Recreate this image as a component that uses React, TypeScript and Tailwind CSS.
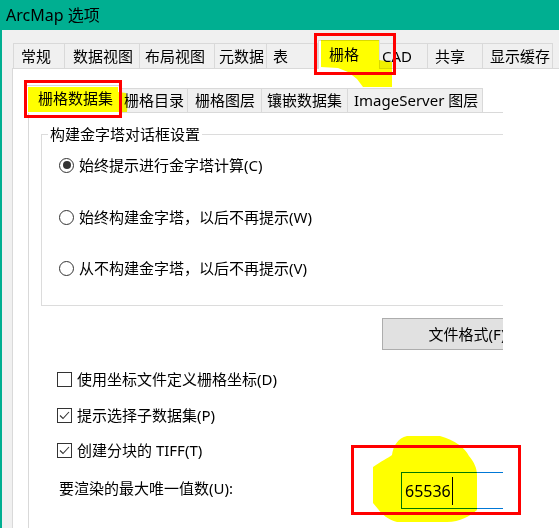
import React from 'react';

const outerTabs = [
  { label: '常规', cls: 'w-[52px] pl-[7px] border-l' },
  { label: '数据视图', cls: 'w-[75px] pl-[8px]' },
  { label: '布局视图', cls: 'w-[75px] pl-[5px]' },
  { label: '元数据', cls: 'w-[52px] pl-[4px]' },
  { label: '表', cls: 'w-[51px] pl-[6px]' },
  { label: '栅格', cls: 'w-[62px] pl-[10px]', active: true },
  { label: 'CAD', cls: 'w-[48px] pl-[2px]' },
  { label: '共享', cls: 'w-[55px] pl-[7px]' },
  { label: '显示缓存', cls: 'w-[70px] pl-[7px]' },
];

const innerTabs = [
  { label: '栅格数据集', cls: 'w-[96px] pl-[11px]', active: true },
  { label: '栅格目录', cls: 'w-[66px] pl-[2px]' },
  { label: '栅格图层', cls: 'w-[74px] pl-[7px]' },
  { label: '镶嵌数据集', cls: 'w-[86px] pl-[5px]' },
  { label: 'ImageServer 图层', cls: 'w-[135px] pl-[6px]' },
];

const Radio = ({ checked, label }: { checked?: boolean; label: string }) => (
  <div className="flex items-center h-[20px] ml-[11px]">
    <span className="w-[15px] h-[15px] rounded-full border border-[#333333] bg-white flex items-center justify-center">
      {checked && <span className="w-[8px] h-[8px] rounded-full bg-[#333333]" />}
    </span>
    <span className="ml-[5px]">{label}</span>
  </div>
);

const Check = ({ checked, label }: { checked?: boolean; label: string }) => (
  <div className="flex items-center h-[20px] ml-[28px]">
    <span className="w-[15px] h-[15px] border border-[#333333] bg-white flex items-center justify-center">
      {checked && (
        <svg width="13" height="13" viewBox="0 0 13 13">
          <polyline points="2,6.5 5,9.5 11,3" fill="none" stroke="#333333" strokeWidth="1.1" />
        </svg>
      )}
    </span>
    <span className="ml-[5px]">{label}</span>
  </div>
);

export default function App() {
  return (
    <div className="relative w-[559px] h-[528px] overflow-hidden bg-[#F0F0F0] text-black text-[15px] font-['Noto_Sans','Noto_Sans_CJK_SC',sans-serif]">
      {/* title bar */}
      <div className="h-[30px] bg-[#00AF91] flex items-center pl-[6px] text-[16px]">ArcMap 选项</div>

      <div className="h-[498px] border-l-2 border-[#00AF91] pl-[10px] pt-[13px] flex flex-col">
        {/* outer tabs */}
        <div className="flex items-end h-[25px] ml-[1px] relative z-10">
          {outerTabs.map((t) =>
            t.active ? (
              <div
                key={t.label}
                className={`${t.cls} h-[29px] -mb-[1px] bg-white border border-b-0 border-[#D9D9D9] flex items-center pb-[2px]`}
              >
                {t.label}
              </div>
            ) : (
              <div
                key={t.label}
                className={`${t.cls} h-[25px] bg-[#F0F0F0] border-t border-r border-[#D9D9D9] flex items-center`}
              >
                {t.label}
              </div>
            )
          )}
        </div>

        {/* outer panel */}
        <div className="flex-1 bg-white border-l border-t border-[#D9D9D9] pl-[15px] pt-[19px] flex flex-col">
          {/* inner tabs */}
          <div className="flex items-end h-[24px] relative z-10">
            {innerTabs.map((t) =>
              t.active ? (
                <div
                  key={t.label}
                  className={`${t.cls} h-[28px] -mb-[1px] -ml-[2px] bg-white border border-b-0 border-[#D9D9D9] flex items-center pb-[2px]`}
                >
                  {t.label}
                </div>
              ) : (
                <div
                  key={t.label}
                  className={`${t.cls} h-[24px] bg-[#F0F0F0] border-t border-r border-[#D9D9D9] flex items-center`}
                >
                  {t.label}
                </div>
              )
            )}
          </div>

          {/* inner panel */}
          <div className="flex-1 w-[475px] border-l border-t border-[#D9D9D9] overflow-hidden">
            <div className="w-[600px] flex flex-col">
              <fieldset className="mt-[11px] ml-[12px] w-[520px] h-[182px] border border-[#DCDCDC] pl-[6px]">
                <legend className="px-[2px] leading-[20px]">构建金字塔对话框设置</legend>
                <div className="flex flex-col mt-[11px]">
                  <Radio checked label="始终提示进行金字塔计算(C)" />
                  <div className="mt-[32px]">
                    <Radio label="始终构建金字塔，以后不再提示(W)" />
                  </div>
                  <div className="mt-[31px]">
                    <Radio label="从不构建金字塔，以后不再提示(V)" />
                  </div>
                </div>
              </fieldset>

              <button className="mt-[12px] ml-[353px] w-[170px] h-[32px] bg-[#E1E1E1] border border-[#ADADAD] flex items-center justify-center">
                文件格式(F)
              </button>

              <div className="mt-[19px]">
                <Check label="使用坐标文件定义栅格坐标(D)" />
              </div>
              <div className="mt-[16px]">
                <Check checked label="提示选择子数据集(P)" />
              </div>
              <div className="mt-[15px]">
                <Check checked label="创建分块的 TIFF(T)" />
              </div>

              <div className="mt-[12px] flex items-center">
                <span className="ml-[30px] w-[342px] mb-[4px]">要渲染的最大唯一值数(U):</span>
                <div className="w-[150px] h-[37px] border border-[#0078D7] bg-white flex items-center pl-[3px] text-[16px]">
                  65536
                  <span className="ml-[1px] w-[1px] h-[28px] bg-black" />
                </div>
              </div>
            </div>
          </div>
        </div>
      </div>

      {/* highlighter marks */}
      <svg className="absolute inset-0 z-20 pointer-events-none mix-blend-multiply" width="559" height="528" viewBox="0 0 559 528">
        <path
          d="M321,40 L379,40 L379,60 L392,62 L392,87 L363,87 L357,79 L348,72 L338,68 L321,67 Z"
          fill="#FFFF00"
        />
        <path d="M28,87 L118,87 L118,92 L126,93 L128,100 L127,112 L28,112 Z" fill="#FFFF00" />
        <path
          d="M407,436 L440,436 C455,440 465,448 469,456 C474,462 477,468 477,475 L477,510 C470,516 460,522 447,522 L397,522 C388,520 382,514 378,509 L373,503 L373,467 C380,462 388,458 392,455 C393,446 398,438 407,436 Z"
          fill="#FFFF00"
        />
      </svg>

      {/* red annotation boxes */}
      <div className="absolute z-30 left-[314px] top-[33px] w-[82px] h-[42px] border-[3px] border-[#FF0000] pointer-events-none" />
      <div className="absolute z-30 left-[24px] top-[80px] w-[98px] h-[38px] border-[3px] border-[#FF0000] pointer-events-none" />
      <div className="absolute z-30 left-[351px] top-[445px] w-[170px] h-[70px] border-[3px] border-[#FF0000] pointer-events-none" />
    </div>
  );
}
